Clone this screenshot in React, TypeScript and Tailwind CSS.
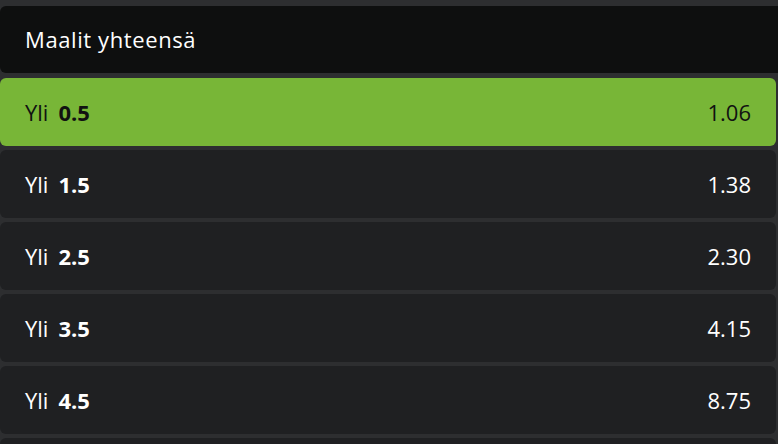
const rows = [
  { line: "0.5", odds: "1.06", active: true },
  { line: "1.5", odds: "1.38" },
  { line: "2.5", odds: "2.30" },
  { line: "3.5", odds: "4.15" },
  { line: "4.5", odds: "8.75" },
];

export default function App() {
  return (
    <div
      className="h-[444px] w-[778px] overflow-hidden bg-[#2d2e30] pt-[6px]"
      style={{ fontFamily: "'Open Sans', 'Noto Sans', sans-serif" }}
    >
      {/* Header */}
      <div className="flex h-[67px] w-[790px] items-center rounded-l-[6px] bg-[#0e0f0f] pl-[25px] text-[22px] tracking-[0.6px] text-white">
        Maalit yhteensä
      </div>

      {/* Odds rows */}
      <div className="mt-[5px] flex flex-col gap-[4px] pr-[2px]">
        {rows.map((r) => (
          <button
            key={r.line}
            className={
              r.active
                ? "flex h-[68px] items-center justify-between rounded-[6px] bg-[#78b637] px-[25px] text-[22px] text-[#111]"
                : "flex h-[68px] items-center justify-between rounded-[6px] bg-[#1f2022] px-[25px] text-[22px] text-white"
            }
          >
            <span className="flex items-center gap-[10px]">
              <span>Yli</span>
              <span className="font-bold">{r.line}</span>
            </span>
            <span>{r.odds}</span>
          </button>
        ))}
        {/* next row, cut off by the viewport */}
        <div className="h-[68px] rounded-[6px] bg-[#1f2022]" />
      </div>
    </div>
  );
}
